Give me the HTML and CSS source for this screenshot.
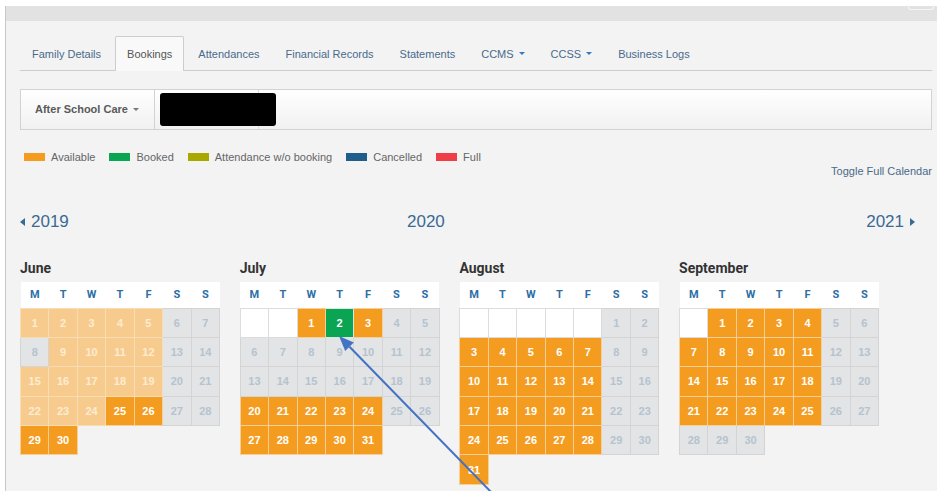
FILE: index.html
```html
<!DOCTYPE html>
<html lang="en">
<head>
<meta charset="utf-8">
<title>Bookings</title>
<link rel="stylesheet" href="styles.css">
</head>
<body>
<div class="frame">
  <div class="topbar"><span class="corner-btn"></span></div>
  <div class="content">
    <ul class="tabs">
      <li><a>Family Details</a></li>
      <li class="active"><a>Bookings</a></li>
      <li><a>Attendances</a></li>
      <li><a>Financial Records</a></li>
      <li><a>Statements</a></li>
      <li><a>CCMS <span class="caret blue"></span></a></li>
      <li><a>CCSS <span class="caret blue"></span></a></li>
      <li><a>Business Logs</a></li>
    </ul>

    <div class="selector">
      <div class="sel-btn">After School Care <span class="caret"></span></div>
      <div class="sel-btn child"></div>
      <div class="redact"></div>
    </div>

    <ul class="legend">
      <li><span class="swatch available"></span>Available</li>
      <li><span class="swatch booked"></span>Booked</li>
      <li><span class="swatch attend"></span>Attendance w/o booking</li>
      <li><span class="swatch cancelled"></span>Cancelled</li>
      <li><span class="swatch full"></span>Full</li>
    </ul>
    <div class="toggle"><a>Toggle Full Calendar</a></div>

    <div class="years">
      <a class="year prev"><span class="tri left"></span>2019</a>
      <span class="year current">2020</span>
      <a class="year next">2021<span class="tri right"></span></a>
    </div>

    <div class="months">
      <div class="month">
        <h3>June</h3>
        <table>
          <thead><tr><th>M</th><th>T</th><th>W</th><th>T</th><th>F</th><th>S</th><th>S</th></tr></thead>
          <tbody>
            <tr><td class="f">1</td><td class="f">2</td><td class="f">3</td><td class="f">4</td><td class="f">5</td><td class="g">6</td><td class="g">7</td></tr>
            <tr><td class="g">8</td><td class="f">9</td><td class="f">10</td><td class="f">11</td><td class="f">12</td><td class="g">13</td><td class="g">14</td></tr>
            <tr><td class="f">15</td><td class="f">16</td><td class="f">17</td><td class="f">18</td><td class="f">19</td><td class="g">20</td><td class="g">21</td></tr>
            <tr><td class="f">22</td><td class="f">23</td><td class="f">24</td><td class="o">25</td><td class="o">26</td><td class="g">27</td><td class="g">28</td></tr>
            <tr><td class="o">29</td><td class="o">30</td></tr>
          </tbody>
        </table>
      </div>

      <div class="month">
        <h3>July</h3>
        <table>
          <thead><tr><th>M</th><th>T</th><th>W</th><th>T</th><th>F</th><th>S</th><th>S</th></tr></thead>
          <tbody>
            <tr><td class="e"></td><td class="e"></td><td class="o">1</td><td class="b">2</td><td class="o">3</td><td class="g">4</td><td class="g">5</td></tr>
            <tr><td class="g">6</td><td class="g">7</td><td class="g">8</td><td class="g">9</td><td class="g">10</td><td class="g">11</td><td class="g">12</td></tr>
            <tr><td class="g">13</td><td class="g">14</td><td class="g">15</td><td class="g">16</td><td class="g">17</td><td class="g">18</td><td class="g">19</td></tr>
            <tr><td class="o">20</td><td class="o">21</td><td class="o">22</td><td class="o">23</td><td class="o">24</td><td class="g">25</td><td class="g">26</td></tr>
            <tr><td class="o">27</td><td class="o">28</td><td class="o">29</td><td class="o">30</td><td class="o">31</td></tr>
          </tbody>
        </table>
      </div>

      <div class="month">
        <h3>August</h3>
        <table>
          <thead><tr><th>M</th><th>T</th><th>W</th><th>T</th><th>F</th><th>S</th><th>S</th></tr></thead>
          <tbody>
            <tr><td class="e"></td><td class="e"></td><td class="e"></td><td class="e"></td><td class="e"></td><td class="g">1</td><td class="g">2</td></tr>
            <tr><td class="o">3</td><td class="o">4</td><td class="o">5</td><td class="o">6</td><td class="o">7</td><td class="g">8</td><td class="g">9</td></tr>
            <tr><td class="o">10</td><td class="o">11</td><td class="o">12</td><td class="o">13</td><td class="o">14</td><td class="g">15</td><td class="g">16</td></tr>
            <tr><td class="o">17</td><td class="o">18</td><td class="o">19</td><td class="o">20</td><td class="o">21</td><td class="g">22</td><td class="g">23</td></tr>
            <tr><td class="o">24</td><td class="o">25</td><td class="o">26</td><td class="o">27</td><td class="o">28</td><td class="g">29</td><td class="g">30</td></tr>
            <tr><td class="o">31</td></tr>
          </tbody>
        </table>
      </div>

      <div class="month">
        <h3>September</h3>
        <table>
          <thead><tr><th>M</th><th>T</th><th>W</th><th>T</th><th>F</th><th>S</th><th>S</th></tr></thead>
          <tbody>
            <tr><td class="e"></td><td class="o">1</td><td class="o">2</td><td class="o">3</td><td class="o">4</td><td class="g">5</td><td class="g">6</td></tr>
            <tr><td class="o">7</td><td class="o">8</td><td class="o">9</td><td class="o">10</td><td class="o">11</td><td class="g">12</td><td class="g">13</td></tr>
            <tr><td class="o">14</td><td class="o">15</td><td class="o">16</td><td class="o">17</td><td class="o">18</td><td class="g">19</td><td class="g">20</td></tr>
            <tr><td class="o">21</td><td class="o">22</td><td class="o">23</td><td class="o">24</td><td class="o">25</td><td class="g">26</td><td class="g">27</td></tr>
            <tr><td class="g">28</td><td class="g">29</td><td class="g">30</td></tr>
          </tbody>
        </table>
      </div>
    </div>
  </div>
</div>

<!-- annotation arrow drawn over the calendar -->
<svg class="pointer" width="937" height="491" viewBox="0 0 937 491" aria-hidden="true">
  <line x1="349.5" y1="346.7" x2="492" y2="493" stroke="#4472c4" stroke-width="2"/>
  <polygon points="339,336 345.2,350.9 353.8,342.5" fill="#4472c4"/>
</svg>
</body>
</html>
```
FILE: styles.css
```css
* { box-sizing: border-box; }

html, body {
  margin: 0;
  padding: 0;
  height: 100%;
  overflow: hidden;
  background: #fff;
}

body {
  position: relative;
  font-family: "Liberation Sans", Arial, sans-serif;
  font-size: 11px;
  color: #555;
}

a { text-decoration: none; cursor: pointer; }

.frame {
  margin: 6px 0 0 5px;
  min-height: calc(100% - 6px);
  border-left: 1px solid #c8c8c8;
  background: #f3f3f3;
}

.topbar {
  height: 15px;
  background: #e2e2e2;
  display: flex;
  justify-content: flex-end;
  padding-right: 3px;
}

.corner-btn {
  display: block;
  width: 26px;
  height: 5px;
  margin-top: -1px;
  border: 1px solid #f4f4f4;
  border-top: none;
  border-radius: 0 0 3px 3px;
}

.content {
  padding: 0 5px 0 14px;
}

/* tabs */
.tabs {
  list-style: none;
  margin: 15px 0 0;
  padding: 0;
  display: flex;
  height: 35px;
  border-bottom: 1px solid #cdcdcd;
}

.tabs li {
  margin-right: 2px;
  margin-bottom: -1px;
}

.tabs a {
  display: flex;
  align-items: center;
  height: 35px;
  padding: 0 11px 1px;
  color: #4a6a8c;
  border: 1px solid transparent;
  border-bottom: none;
  border-radius: 2px 2px 0 0;
  white-space: nowrap;
}

.tabs .active a {
  color: #555;
  background: #f9f9f9;
  border-color: #cdcdcd;
}

.caret {
  display: inline-block;
  width: 0;
  height: 0;
  margin-left: 5px;
  border-left: 3px solid transparent;
  border-right: 3px solid transparent;
  border-top: 3px solid #777;
  vertical-align: middle;
}

.caret.blue { border-top-color: #2f7bc8; }

/* service selector */
.selector {
  position: relative;
  margin-top: 18px;
  height: 41px;
  display: flex;
  border: 1px solid #d2d2d2;
  background: linear-gradient(#ffffff, #f1f1f1);
}

.sel-btn {
  display: flex;
  align-items: center;
  width: 134px;
  padding: 0 14px 1px;
  border-right: 1px solid #d2d2d2;
  font-weight: 700;
  color: #5a5a5a;
  white-space: nowrap;
}

.sel-btn.child {
  width: 104px;
  border-right-color: #dcdcdc;
}

.redact {
  position: absolute;
  left: 139px;
  top: 3px;
  width: 116px;
  height: 33px;
  background: #000;
  border-radius: 3px;
}

/* legend */
.legend {
  list-style: none;
  margin: 20px 0 0 4px;
  padding: 0;
  display: flex;
  height: 14px;
  line-height: 14px;
  color: #666;
}

.legend li {
  display: flex;
  align-items: center;
  margin-right: 14px;
}

.swatch {
  display: inline-block;
  width: 21px;
  height: 8px;
  margin-right: 6px;
}

.swatch.available { background: #f39c1f; }
.swatch.booked { background: #0aa552; }
.swatch.attend { background: #a9a800; }
.swatch.cancelled { background: #1e5d8c; }
.swatch.full { background: #ee3e47; }

.toggle {
  text-align: right;
  line-height: 14px;
  height: 14px;
}

.toggle a { color: #4a6a88; }

/* year navigation */
.years {
  margin-top: 34px;
  display: grid;
  grid-template-columns: 387px auto 1fr;
  align-items: center;
  height: 20px;
  padding-right: 17px;
  font-size: 17px;
  color: #3a6a94;
}

.year { color: #3a6a94; display: flex; align-items: center; }
.year.next { justify-self: end; }

.tri {
  display: inline-block;
  width: 0;
  height: 0;
  border-top: 4px solid transparent;
  border-bottom: 4px solid transparent;
}

.tri.left { border-right: 5px solid #3a6a94; margin-right: 6px; }
.tri.right { border-left: 5px solid #3a6a94; margin-left: 6px; }

/* month grids */
.months {
  display: flex;
  gap: 19.7px;
  margin-top: 28px;
}

.month h3 {
  margin: 0 0 6px;
  height: 16px;
  line-height: 16px;
  font-family: Roboto, "Liberation Sans", sans-serif;
  font-size: 14px;
  font-weight: 700;
  color: #333;
}

.month table {
  width: 200px;
  table-layout: fixed;
  border-collapse: collapse;
}

.month th {
  height: 26px;
  padding: 0;
  background: #fff;
  font-family: Roboto, "Liberation Sans", sans-serif;
  font-size: 11px;
  font-weight: 700;
  color: #2c6ea6;
}

.month td {
  height: 29.4px;
  padding: 0;
  text-align: center;
  font-weight: 700;
  font-size: 11px;
  color: #fff;
  border: 1px solid #dcdcdc;
}

.month td.o { background: #f39c1f; border-color: #f6cf97; }
.month td.f { background: #f7cb8d; color: #fdebd2; border-color: #f8dcb4; }
.month td.g { background: #e3e4e5; color: #b5c3cf; border-color: #d4d4d4; }
.month td.b { background: #0aa552; border-color: #d8eadf; }
.month td.e { background: #fff; border-color: #dcdcdc; }

.pointer {
  position: absolute;
  left: 0;
  top: 0;
  pointer-events: none;
}
```
